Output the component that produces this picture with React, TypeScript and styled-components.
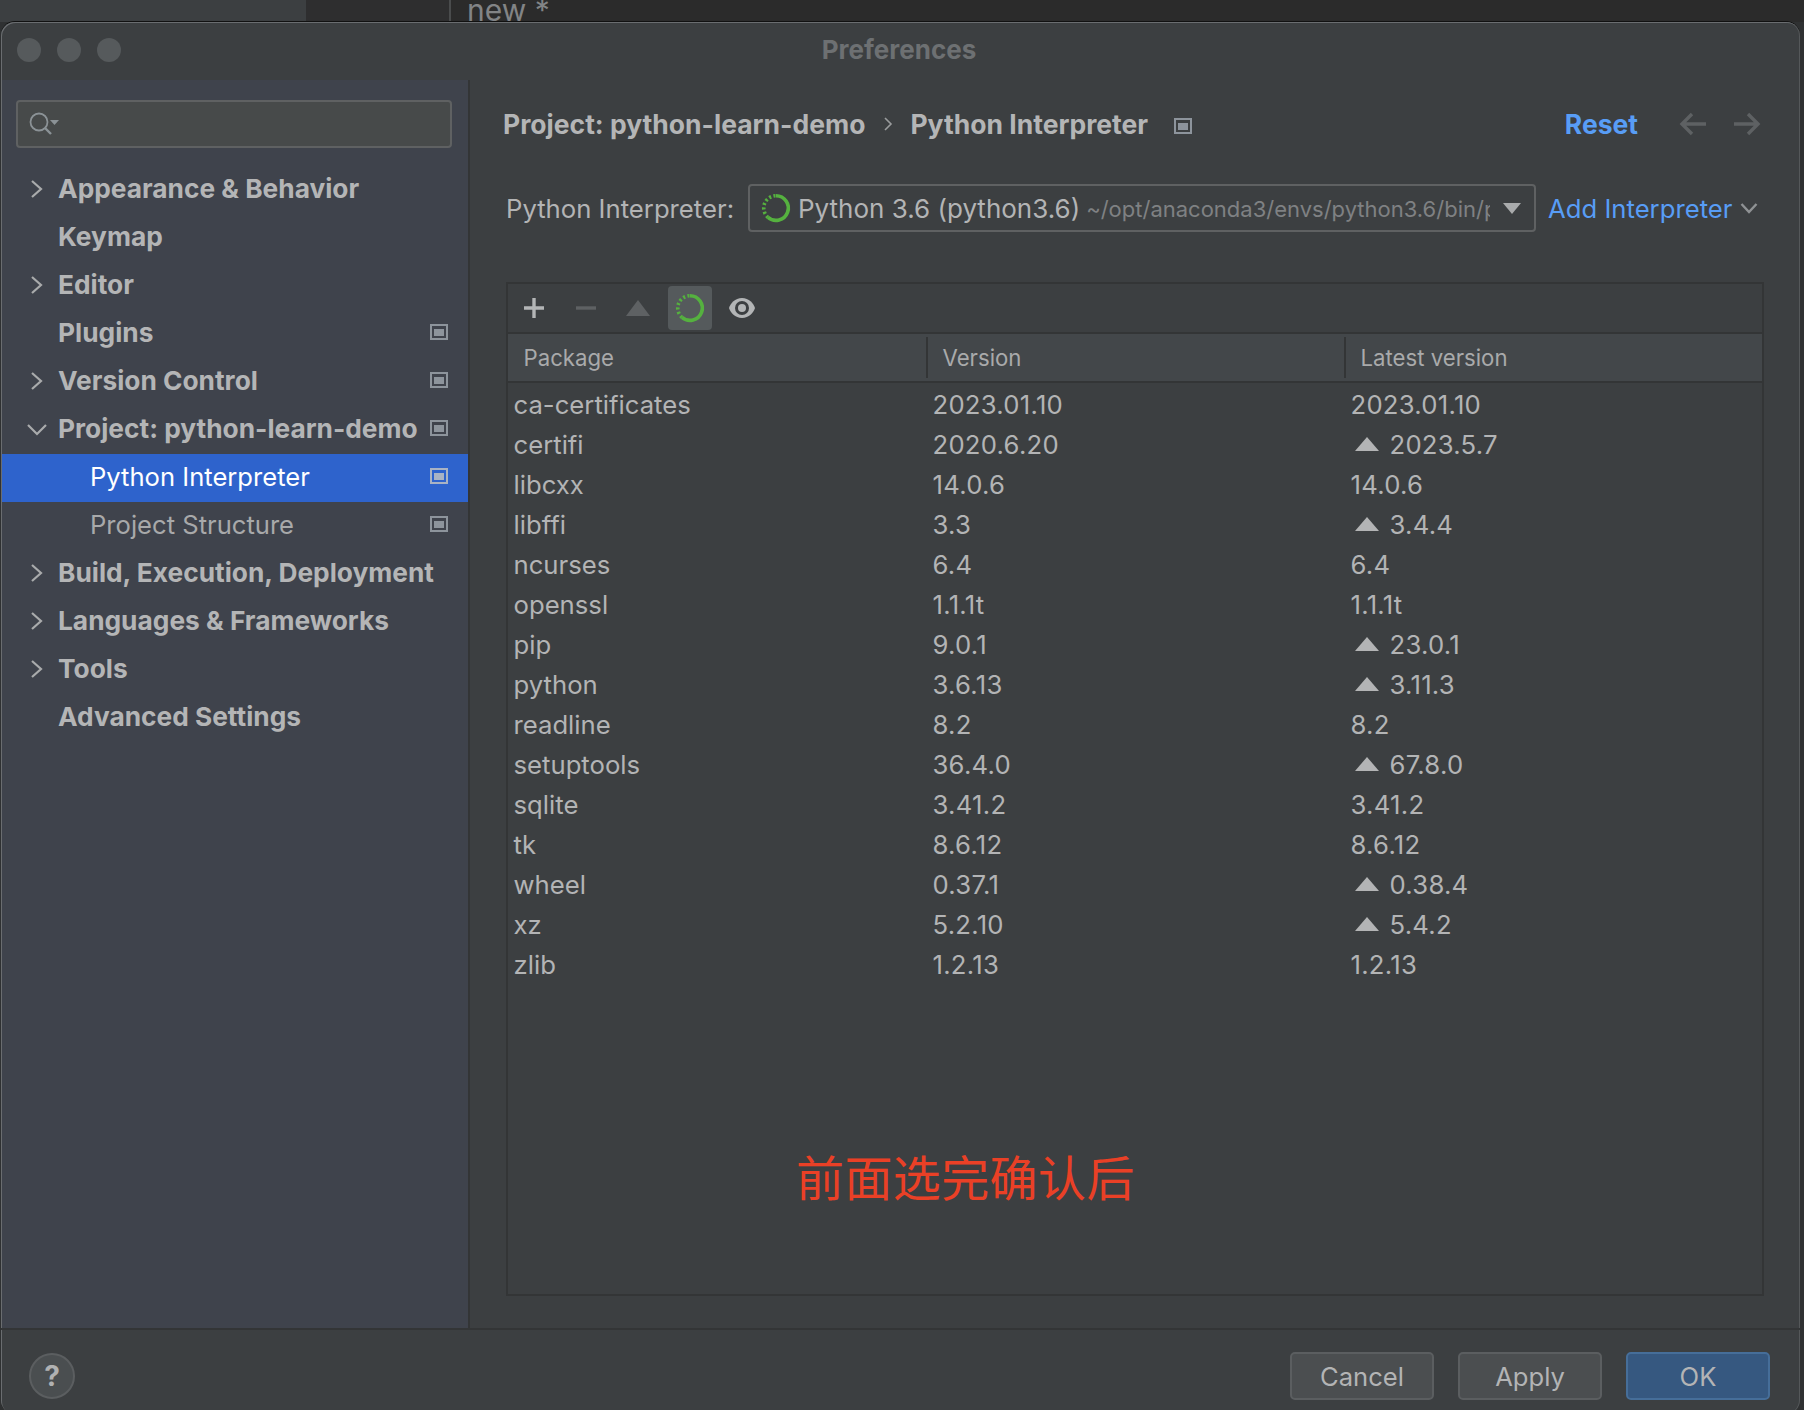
import React from "react";
import styled, { createGlobalStyle } from "styled-components";

const Global = createGlobalStyle`
  html, body { margin: 0; padding: 0; background: #2f3132; height: 1410px; overflow: hidden; }
  #root { height: 1410px; }
  * { box-sizing: border-box; }
`;

const FONT = `Inter, "Liberation Sans", "Noto Sans CJK SC", sans-serif`;

const Page = styled.div`
  width: 1804px; height: 1410px; overflow: hidden; display: flex; flex-direction: column;
  font-family: ${FONT}; background: #2f3132;
`;
const BackStrip = styled.div`
  height: 22px; flex: none; display: flex; background: #3c3f41; overflow: hidden;
`;
const BackGap = styled.div`
  width: 306px; background: #3c3f41;
`;
const BackTab = styled.div`
  width: 145px; background: #2e2e2f; border-right: 2px solid #4a4c4d;
`;
const BackEditor = styled.div`
  flex: 1; background: #2b2b2b; padding-left: 16px; font-size: 30px; line-height: 22px;
  color: #828486; white-space: nowrap;
  span { display: block; margin-top: -1px; }
`;
const Window = styled.div`
  width: 1799px; margin-left: 1px; height: 1392px; flex: none; display: flex; flex-direction: column;
  background: #3c3f41; border-radius: 14px; overflow: hidden;
  box-shadow: inset 1px 1px 0 #6a6d70, inset -1px 0 0 #55585a, 0 -1px 0 #111;
  position: relative;
`;
const TitleBar = styled.div`
  height: 58px; flex: none; display: flex; align-items: center; position: relative; padding-left: 16px; gap: 16px;
`;
const Light = styled.div`
  width: 24px; height: 24px; border-radius: 50%; background: #565a5c; margin-top: -2px;
`;
const Title = styled.div`
  position: absolute; left: 0; right: 0; top: 0; height: 54px; display: flex; align-items: center; justify-content: center;
  font-size: 26px; font-weight: 700; color: #6d7072; margin-left: -3px;
`;
const Body = styled.div`
  flex: 1; display: flex; min-height: 0;
`;
const Sidebar = styled.aside`
  width: 468px; flex: none; margin-left: 1px; background: #3f434c; border-right: 2px solid #333536;
  padding-top: 20px; display: flex; flex-direction: column;
`;
const Search = styled.div`
  width: 436px; height: 48px; margin-left: 14px; background: #474a4a; border: 2px solid #5f6162; border-radius: 4px;
  display: flex; align-items: center; padding-left: 10px; flex: none;
`;
const Tree = styled.div`
  margin-top: 18px; display: flex; flex-direction: column;
`;
const Row = styled.div<{ $selected?: boolean; $child?: boolean }>`
  height: 48px; display: flex; align-items: center; position: relative; padding-bottom: 4px;
  padding-left: ${(p) => (p.$child ? 88 : 56)}px;
  font-size: ${(p) => (p.$child ? 25.6 : 26.3)}px; white-space: nowrap;
  font-weight: ${(p) => (p.$child ? 400 : 700)};
  color: ${(p) => (p.$selected ? "#ffffff" : p.$child ? "#a8a9aa" : "#b4b5b6")};
  background: ${(p) => (p.$selected ? "#2e63cc" : "transparent")};
`;
const Arrow = styled.svg`
  position: absolute; left: 24px; top: 11px; width: 22px; height: 24px;
  fill: none; stroke: #a9abac; stroke-width: 2.2;
`;
const TreeBadge = styled.span`
  position: absolute; left: 428px; top: 14px; display: flex;
`;
const Main = styled.main`
  flex: 1; min-width: 0; padding: 20px 36px 32px 32px; display: flex; flex-direction: column;
`;
const Crumbs = styled.div`
  height: 50px; flex: none; display: flex; align-items: center; padding-bottom: 2px; padding-left: 1px; font-size: 26.5px; font-weight: 700; color: #b4b5b6; white-space: nowrap;
`;
const CrumbSep = styled.svg`
  width: 14px; height: 18px; margin: 0 15px 0 16px; fill: none; stroke: #9a9c9d; stroke-width: 1.6;
`;
const CrumbBadge = styled.span`
  display: flex; margin-left: 26px; margin-top: 3px;
`;
const Spacer = styled.div`flex: 1;`;
const Reset = styled.span`
  color: #589df6; margin-right: 41px;
`;
const NavArrow = styled.svg<{ $forward?: boolean }>`
  width: 28px; height: 24px; fill: none; stroke: #5e6163; stroke-width: 3.4; flex: none;
  margin-left: ${(p) => (p.$forward ? 26 : 0)}px; margin-right: ${(p) => (p.$forward ? 3 : 0)}px;
`;
const InterpRow = styled.div`
  margin-top: 34px; margin-left: 4px; height: 48px; flex: none; display: flex; align-items: center; font-size: 25.7px; color: #b3b4b5; white-space: nowrap;
`;
const InterpLabel = styled.label`
  width: 242px; flex: none;
`;
const Combo = styled.div`
  width: 788px; height: 48px; flex: none; border: 2px solid #5f6162; border-radius: 4px; display: flex; align-items: center;
  padding-left: 10px; overflow: hidden;
`;
const ComboName = styled.span`
  margin-left: 6px; flex: none; font-size: 26px;
`;
const ComboPath = styled.span`
  margin-left: 6px; font-size: 22px; color: #7f8183; width: 404px; overflow: hidden; flex: none; padding-top: 2px;
`;
const ComboCaret = styled.svg`
  width: 18px; height: 11px; margin-left: 13px; flex: none; fill: #a9abac;
`;
const AddLink = styled.span`
  margin-left: 12px; color: #589df6; display: flex; align-items: center;
`;
const AddCaret = styled.svg`
  width: 18px; height: 12px; margin-left: 8px; fill: none; stroke: #8f9294; stroke-width: 2.4;
`;
const Table = styled.section`
  margin-top: 50px; margin-left: 4px; flex: 1; border: 2px solid #333536; display: flex; flex-direction: column; position: relative; min-height: 0;
`;
const Toolbar = styled.div`
  height: 50px; flex: none; display: flex; align-items: center; padding: 0 0 1px 4px; gap: 8px; border-bottom: 2px solid #333536;
`;
const ToolBtn = styled.div<{ $active?: boolean }>`
  width: 44px; height: 44px; display: flex; align-items: center; justify-content: center; border-radius: 4px;
  background: ${(p) => (p.$active ? "#555a5c" : "transparent")};
`;
const HeaderRow = styled.div`
  height: 49px; flex: none; display: grid; grid-template-columns: 420px 418px 1fr; background: #43474a; border-bottom: 2px solid #333536;
`;
const HeaderCell = styled.div<{ $last?: boolean }>`
  display: flex; align-items: center; padding-left: 14.5px; font-size: 22.2px; color: #a9aaab; position: relative;
  &:first-child { padding-left: 15.5px; }
  &::after {
    content: ""; display: ${(p) => (p.$last ? "none" : "block")}; position: absolute; right: 0; top: 3px; bottom: 3px; width: 2px; background: #333536;
  }
`;
const Rows = styled.div`
  padding-top: 1px; display: flex; flex-direction: column;
`;
const PkgRow = styled.div`
  height: 40px; display: grid; grid-template-columns: 420px 418px 1fr; align-items: center; font-size: 25.7px; color: #b3b4b5; white-space: nowrap;
`;
const Cell = styled.div<{ $num?: boolean }>`
  padding-left: 4.5px; display: flex; align-items: center;
  letter-spacing: ${(p) => (p.$num ? 0.25 : 0)}px;
  &:first-child { padding-left: 5.5px; }
`;
const UpIcon = styled.svg`
  width: 24px; height: 14px; fill: #b3b4b5; margin-left: 4px; margin-right: 11px; flex: none;
`;
const Annotation = styled.div`
  position: absolute; left: 288px; top: 861px; font-family: "Noto Sans CJK SC", sans-serif; font-size: 48px; line-height: 60px;
  color: #ea4026; white-space: nowrap; letter-spacing: 0.4px;
`;
const Footer = styled.footer`
  height: 86px; flex: none; border-top: 2px solid #333536; display: flex; padding: 22px 30px 0 28px;
`;
const Help = styled.div`
  width: 46px; height: 46px; border-radius: 50%; background: #4a4e50; border: 2px solid #5b5e60; display: flex; align-items: center; justify-content: center;
  font-size: 28px; font-weight: 700; color: #b0b1b2; margin-top: 1px;
`;
const Btn = styled.button<{ $primary?: boolean }>`
  width: 144px; height: 48px; margin-left: 24px; border-radius: 5px; font-family: ${FONT}; font-size: 25.6px; padding: 0;
  border: 2px solid ${(p) => (p.$primary ? "#466e99" : "#5b5e60")};
  background: ${(p) => (p.$primary ? "#365880" : "#4b4e50")};
  color: #b3b4b5;
`;

const Badge = ({ light }: { light?: boolean }) => (
  <svg width="18" height="16" viewBox="0 0 18 16">
    <rect x="1" y="1" width="16" height="14" fill="none" stroke={light ? "#a9b3c4" : "#8d949c"} strokeWidth="2" />
    <rect x="4" y="5" width="10" height="7" fill={light ? "#a9b3c4" : "#8d949c"} />
  </svg>
);

const Spinner = ({ size }: { size: number }) => (
  <svg width={size} height={size} viewBox="0 0 30 30">
    <path d="M15 3.5a11.5 11.5 0 1 1-7.5 20.2" fill="none" stroke="#55b13f" strokeWidth="3.4" />
    <path d="M7.500 23.700A11.500 11.500 0 0 1 15 3.500" fill="none" stroke="#55b13f" strokeWidth="3.4" strokeDasharray="2 2.2" />
  </svg>
);

type Item = { label: string; arrow?: "right" | "down"; badge?: boolean; child?: boolean; selected?: boolean };
const items: Item[] = [
  { label: "Appearance & Behavior", arrow: "right" },
  { label: "Keymap" },
  { label: "Editor", arrow: "right" },
  { label: "Plugins", badge: true },
  { label: "Version Control", arrow: "right", badge: true },
  { label: "Project: python-learn-demo", arrow: "down", badge: true },
  { label: "Python Interpreter", child: true, selected: true, badge: true },
  { label: "Project Structure", child: true, badge: true },
  { label: "Build, Execution, Deployment", arrow: "right" },
  { label: "Languages & Frameworks", arrow: "right" },
  { label: "Tools", arrow: "right" },
  { label: "Advanced Settings" },
];

const packages: [string, string, string, boolean][] = [
  ["ca-certificates", "2023.01.10", "2023.01.10", false],
  ["certifi", "2020.6.20", "2023.5.7", true],
  ["libcxx", "14.0.6", "14.0.6", false],
  ["libffi", "3.3", "3.4.4", true],
  ["ncurses", "6.4", "6.4", false],
  ["openssl", "1.1.1t", "1.1.1t", false],
  ["pip", "9.0.1", "23.0.1", true],
  ["python", "3.6.13", "3.11.3", true],
  ["readline", "8.2", "8.2", false],
  ["setuptools", "36.4.0", "67.8.0", true],
  ["sqlite", "3.41.2", "3.41.2", false],
  ["tk", "8.6.12", "8.6.12", false],
  ["wheel", "0.37.1", "0.38.4", true],
  ["xz", "5.2.10", "5.4.2", true],
  ["zlib", "1.2.13", "1.2.13", false],
];

export default function App() {
  return (
    <Page>
      <Global />
      <BackStrip>
        <BackGap />
        <BackTab />
        <BackEditor><span>new *</span></BackEditor>
      </BackStrip>
      <Window>
        <TitleBar>
          <Light /><Light /><Light />
          <Title>Preferences</Title>
        </TitleBar>
        <Body>
          <Sidebar>
            <Search>
              <svg width="34" height="26" viewBox="0 0 34 26">
                <circle cx="11" cy="11" r="8.5" fill="none" stroke="#8b9296" strokeWidth="1.8" />
                <path d="M17 17l6 6" stroke="#8b9296" strokeWidth="2.4" />
                <path d="M22 9h9l-4.5 5z" fill="#8b9296" />
              </svg>
            </Search>
            <Tree>
              {items.map((it) => (
                <Row key={it.label} $child={it.child} $selected={it.selected}>
                  {it.arrow === "right" && (
                    <Arrow viewBox="0 0 22 24"><path d="M6 4l9 8-9 8" /></Arrow>
                  )}
                  {it.arrow === "down" && (
                    <Arrow viewBox="0 0 22 24"><path d="M2 8l9 9 9-9" /></Arrow>
                  )}
                  {it.label}
                  {it.badge && <TreeBadge><Badge light={it.selected} /></TreeBadge>}
                </Row>
              ))}
            </Tree>
          </Sidebar>
          <Main>
            <Crumbs>
              Project: python-learn-demo
              <CrumbSep viewBox="0 0 14 18"><path d="M4 3l6 6-6 6" /></CrumbSep>
              Python Interpreter
              <CrumbBadge><Badge /></CrumbBadge>
              <Spacer />
              <Reset>Reset</Reset>
              <NavArrow viewBox="0 0 28 24"><path d="M27 12H3M13 2L3 12l10 10" /></NavArrow>
              <NavArrow $forward viewBox="0 0 28 24"><path d="M1 12h24M15 2l10 10-10 10" /></NavArrow>
            </Crumbs>
            <InterpRow>
              <InterpLabel>Python Interpreter:</InterpLabel>
              <Combo>
                <Spinner size={32} />
                <ComboName>Python 3.6 (python3.6)</ComboName>
                <ComboPath>~/opt/anaconda3/envs/python3.6/bin/python</ComboPath>
                <ComboCaret viewBox="0 0 18 11"><path d="M0 0h18L9 11z" /></ComboCaret>
              </Combo>
              <AddLink>
                Add Interpreter
                <AddCaret viewBox="0 0 18 12"><path d="M1.500 2l7.500 8 7.500-8" /></AddCaret>
              </AddLink>
            </InterpRow>
            <Table>
              <Toolbar>
                <ToolBtn>
                  <svg width="22" height="22" viewBox="0 0 22 22"><path d="M11 1v20M1 11h20" stroke="#b3b5b6" strokeWidth="3.4" /></svg>
                </ToolBtn>
                <ToolBtn>
                  <svg width="22" height="22" viewBox="0 0 22 22"><path d="M1 11h20" stroke="#5e6163" strokeWidth="3.4" /></svg>
                </ToolBtn>
                <ToolBtn>
                  <svg width="24" height="16" viewBox="0 0 24 16"><path d="M12 0l12 16H0z" fill="#5e6163" /></svg>
                </ToolBtn>
                <ToolBtn $active>
                  <Spinner size={32} />
                </ToolBtn>
                <ToolBtn>
                  <svg width="28" height="22" viewBox="0 0 28 22">
                    <path d="M14 1C7 1 2.500 6.500 1 11c1.500 4.500 6 10 13 10s11.500-5.500 13-10c-1.500-4.500-6-10-13-10z" fill="#b3b5b6" />
                    <circle cx="14" cy="11" r="7" fill="#3c3f41" />
                    <circle cx="14" cy="11" r="4" fill="#b3b5b6" />
                  </svg>
                </ToolBtn>
              </Toolbar>
              <HeaderRow>
                <HeaderCell>Package</HeaderCell>
                <HeaderCell>Version</HeaderCell>
                <HeaderCell $last>Latest version</HeaderCell>
              </HeaderRow>
              <Rows>
                {packages.map(([n, v, l, up]) => (
                  <PkgRow key={n}>
                    <Cell>{n}</Cell>
                    <Cell $num>{v}</Cell>
                    <Cell $num>
                      {up && <UpIcon viewBox="0 0 24 14"><path d="M12 0l12 14H0z" /></UpIcon>}
                      {l}
                    </Cell>
                  </PkgRow>
                ))}
              </Rows>
              <Annotation>前面选完确认后</Annotation>
            </Table>
          </Main>
        </Body>
        <Footer>
          <Help>?</Help>
          <Spacer />
          <Btn>Cancel</Btn>
          <Btn>Apply</Btn>
          <Btn $primary>OK</Btn>
        </Footer>
      </Window>
    </Page>
  );
}
